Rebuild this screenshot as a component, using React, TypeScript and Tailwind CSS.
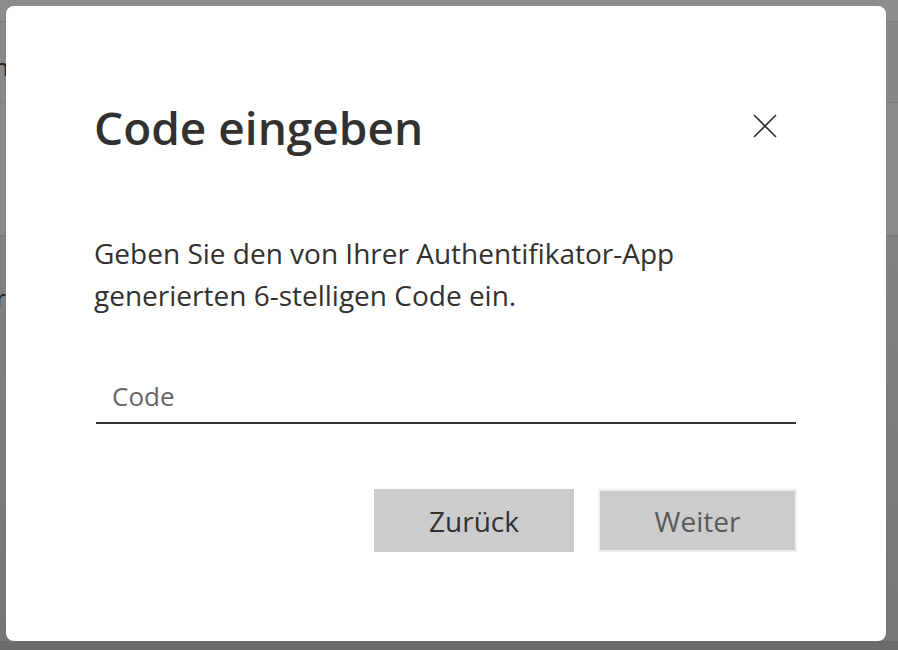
import React from "react";

const font = { fontFamily: '"Open Sans", "Noto Sans", sans-serif' };

function CloseIcon() {
  return (
    <svg width="24" height="24" viewBox="0 0 24 24" fill="none">
      <path d="M1 1L23 23M23 1L1 23" stroke="#333" strokeWidth="1.6" />
    </svg>
  );
}

export default function App() {
  return (
    <div className="relative w-[898px] h-[650px] overflow-hidden bg-[#7c7c7c]" style={font}>
      {/* dimmed page behind */}
      <div className="flex flex-col">
        <div className="h-[22px] bg-[#8c8c8c] border-b border-[#7a7a7a]" />
        <div className="h-[81px] bg-[#888888] border-b border-[#7d7d7d] pt-[30px] text-[24px] leading-[30px] text-[#222]">
          <span className="-ml-[6px]">n</span>
        </div>
        <div className="h-[134px] bg-[#8a8a8a] border-b-2 border-[#7a7a7a]" />
        <div className="h-[404px] bg-gradient-to-b from-[#828282] to-[#767676] pt-[46px] text-[24px] leading-[30px] text-[#222]">
          <span className="-ml-[4px]">r</span>
        </div>
        <div className="h-[10px] bg-[#6b6b6b]" />
      </div>

      <div className="absolute left-[6px] top-[6px] w-[880px] h-[635px] bg-white rounded-[8px] px-[88px] pt-[96px]">
        <div className="flex items-start justify-between">
          <h1 className="text-[46px] leading-[54px] font-semibold text-[#323130] -mt-[2px]">Code eingeben</h1>
          <button className="mt-[12px] mr-[21px]">
            <CloseIcon />
          </button>
        </div>
        <p className="mt-[78px] text-[28px] leading-[42px] text-[#323130] w-[640px]">
          Geben Sie den von Ihrer Authentifikator-App generierten 6-stelligen Code ein.
        </p>
        <div className="mt-[64px] w-[700px] ml-[2px] border-b-2 border-[#333] pb-[10px] pl-[16px] text-[26px] leading-[32px] text-[#666]">
          Code
        </div>
        <div className="mt-[65px] flex justify-end gap-[24px] w-[701px] ml-[2px]">
          <button className="w-[200px] h-[63px] bg-[#cccccc] text-[28px] text-[#323130]">Zurück</button>
          <button className="w-[199px] h-[63px] bg-[#cccccc] border-2 border-[#efefef] text-[28px] text-[#5a5a5a]">
            Weiter
          </button>
        </div>
      </div>
    </div>
  );
}
